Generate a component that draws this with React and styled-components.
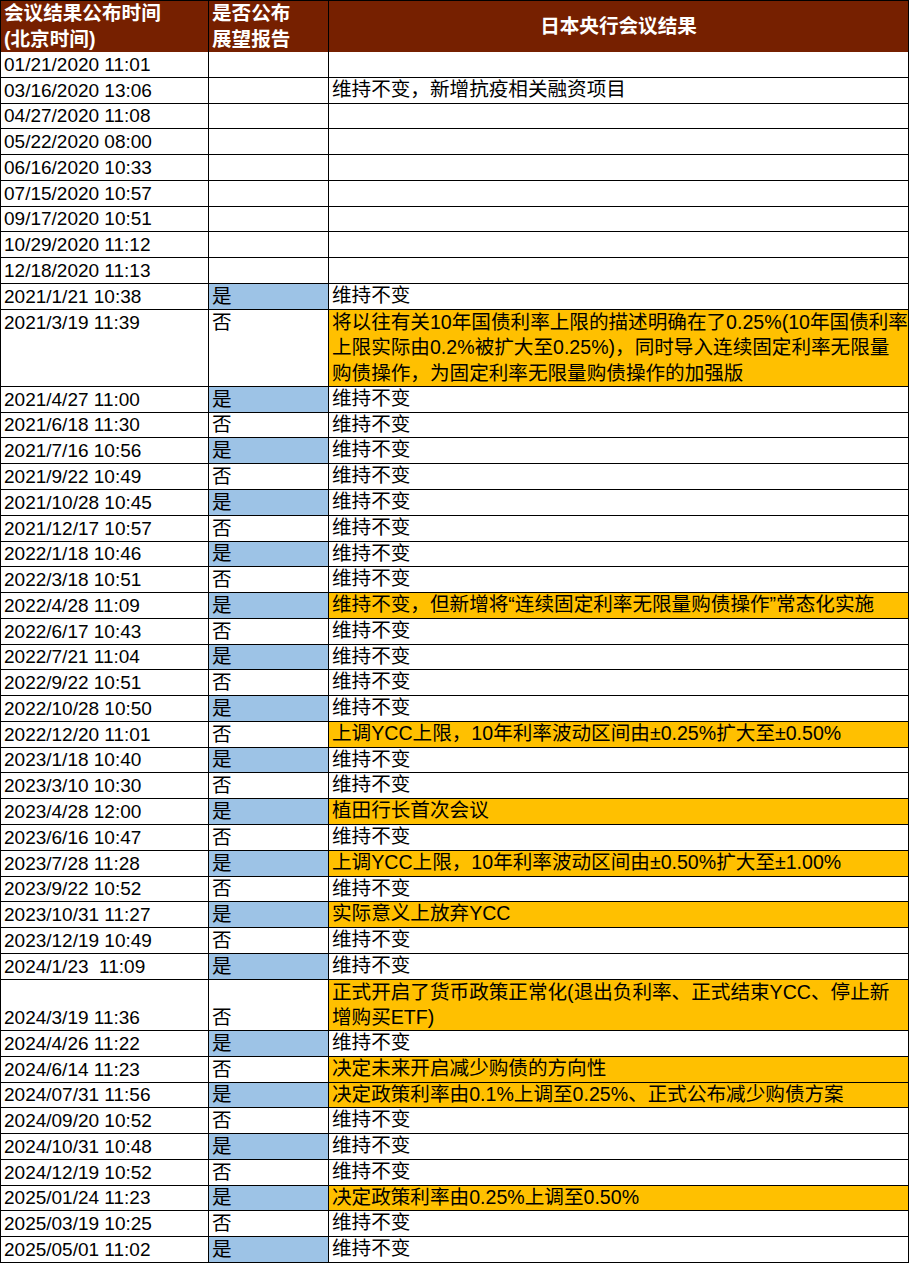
import React from "react";
import styled, { createGlobalStyle } from "styled-components";

const UNIT = 25.77;

const Global = createGlobalStyle`
  html, body { margin: 0; padding: 0; background: #fff; }
  body {
    font-family: "Liberation Sans", Arial, "Noto Sans CJK SC", sans-serif;
    color: #000;
  }
`;

const Sheet = styled.div`
  width: 909px;
  border-top: 1px solid #000;
  border-left: 1px solid #000;
  box-sizing: border-box;
  font-size: 19px;
`;

const Row = styled.div`
  display: grid;
  grid-template-columns: 208px 120px 580px;
  height: ${(p) => (p.$header ? "51px" : `${p.$lines * UNIT}px`)};
`;

const Cell = styled.div`
  box-sizing: border-box;
  border-right: 1px solid #000;
  border-bottom: 1px solid #000;
  padding: 0 3px 0 3px;
  overflow: hidden;
  white-space: pre;
  display: flex;
  flex-direction: column;
  font-size: ${(p) => (p.$cjk ? "19.6px" : "19px")};
  justify-content: ${(p) => (p.$align === "top" ? "flex-start" : "flex-end")};
  line-height: ${(p) => (p.$lines > 1 ? "25.8px" : "23px")};
  padding-bottom: ${(p) => (p.$lines > 1 ? "0" : "1px")};
  background: ${(p) =>
    p.$fill === "blue" ? "#9DC3E6" : p.$fill === "orange" ? "#FFC000" : "#fff"};
`;

const HeadCell = styled.div`
  box-sizing: border-box;
  border-right: 1px solid #000;
  border-bottom: 1px solid #000;
  background: #762000;
  color: #fff;
  font-weight: bold;
  font-size: 19.6px;
  line-height: 25.5px;
  padding: 0 3px;
  white-space: pre;
  display: flex;
  flex-direction: column;
  justify-content: center;
  align-items: ${(p) => (p.$center ? "center" : "flex-start")};
`;

const rows = [
  ["01/21/2020 11:01", "", ""],
  ["03/16/2020 13:06", "", "维持不变，新增抗疫相关融资项目"],
  ["04/27/2020 11:08", "", ""],
  ["05/22/2020 08:00", "", ""],
  ["06/16/2020 10:33", "", ""],
  ["07/15/2020 10:57", "", ""],
  ["09/17/2020 10:51", "", ""],
  ["10/29/2020 11:12", "", ""],
  ["12/18/2020 11:13", "", ""],
  ["2021/1/21 10:38", "是", "维持不变"],
  [
    "2021/3/19 11:39",
    "否",
    [
      "将以往有关10年国债利率上限的描述明确在了0.25%(10年国债利率",
      "上限实际由0.2%被扩大至0.25%)，同时导入连续固定利率无限量",
      "购债操作，为固定利率无限量购债操作的加强版",
    ],
    true,
    "top",
  ],
  ["2021/4/27 11:00", "是", "维持不变"],
  ["2021/6/18 11:30", "否", "维持不变"],
  ["2021/7/16 10:56", "是", "维持不变"],
  ["2021/9/22 10:49", "否", "维持不变"],
  ["2021/10/28 10:45", "是", "维持不变"],
  ["2021/12/17 10:57", "否", "维持不变"],
  ["2022/1/18 10:46", "是", "维持不变"],
  ["2022/3/18 10:51", "否", "维持不变"],
  ["2022/4/28 11:09", "是", "维持不变，但新增将“连续固定利率无限量购债操作”常态化实施", true],
  ["2022/6/17 10:43", "否", "维持不变"],
  ["2022/7/21 11:04", "是", "维持不变"],
  ["2022/9/22 10:51", "否", "维持不变"],
  ["2022/10/28 10:50", "是", "维持不变"],
  ["2022/12/20 11:01", "否", "上调YCC上限，10年利率波动区间由±0.25%扩大至±0.50%", true],
  ["2023/1/18 10:40", "是", "维持不变"],
  ["2023/3/10 10:30", "否", "维持不变"],
  ["2023/4/28 12:00", "是", "植田行长首次会议", true],
  ["2023/6/16 10:47", "否", "维持不变"],
  ["2023/7/28 11:28", "是", "上调YCC上限，10年利率波动区间由±0.50%扩大至±1.00%", true],
  ["2023/9/22 10:52", "否", "维持不变"],
  ["2023/10/31 11:27", "是", "实际意义上放弃YCC", true],
  ["2023/12/19 10:49", "否", "维持不变"],
  ["2024/1/23  11:09", "是", "维持不变"],
  [
    "2024/3/19 11:36",
    "否",
    ["正式开启了货币政策正常化(退出负利率、正式结束YCC、停止新", "增购买ETF)"],
    true,
    "bottom",
  ],
  ["2024/4/26 11:22", "是", "维持不变"],
  ["2024/6/14 11:23", "否", "决定未来开启减少购债的方向性", true],
  ["2024/07/31 11:56", "是", "决定政策利率由0.1%上调至0.25%、正式公布减少购债方案", true],
  ["2024/09/20 10:52", "否", "维持不变"],
  ["2024/10/31 10:48", "是", "维持不变"],
  ["2024/12/19 10:52", "否", "维持不变"],
  ["2025/01/24 11:23", "是", "决定政策利率由0.25%上调至0.50%", true],
  ["2025/03/19 10:25", "否", "维持不变"],
  ["2025/05/01 11:02", "是", "维持不变"],
];

export default function App() {
  return (
    <>
      <Global />
      <Sheet>
        <Row $header>
          <HeadCell>{"会议结果公布时间\n(北京时间)"}</HeadCell>
          <HeadCell>{"是否公布\n展望报告"}</HeadCell>
          <HeadCell $center>日本央行会议结果</HeadCell>
        </Row>
        {rows.map(([date, flag, text, hi, align], i) => {
          const lines = Array.isArray(text) ? text : [text];
          const n = lines.length;
          const side = n > 1 && align === "top" ? 2 : 1;
          return (
            <Row key={i} $lines={n}>
              <Cell $lines={side} $align={align}>
                {date}
              </Cell>
              <Cell
                $cjk
                $lines={side}
                $align={align}
                $fill={flag === "是" ? "blue" : undefined}
              >
                {flag}
              </Cell>
              <Cell $cjk $lines={n} $align="top" $fill={hi ? "orange" : undefined}>
                {lines.map((l, j) => (
                  <span key={j}>{l}</span>
                ))}
              </Cell>
            </Row>
          );
        })}
      </Sheet>
    </>
  );
}
